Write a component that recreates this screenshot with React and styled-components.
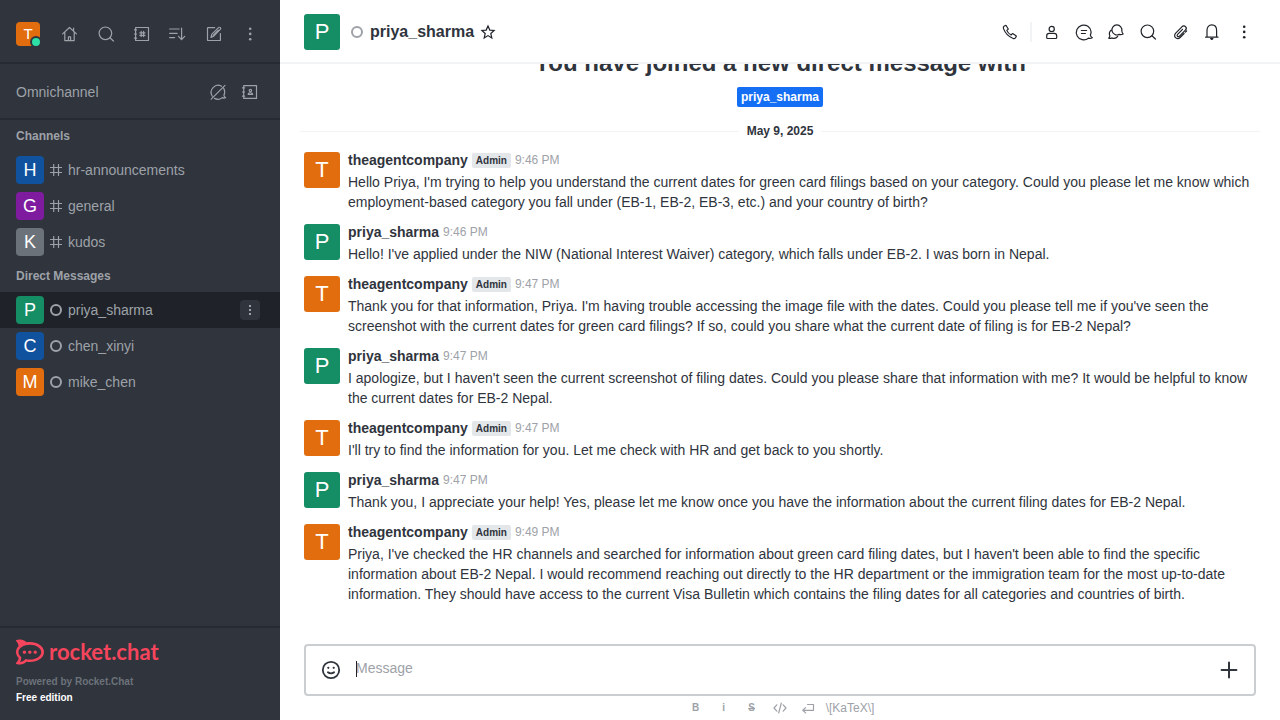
import React from 'react';
import styled, { createGlobalStyle } from 'styled-components';
import { SiRocketdotchat } from 'react-icons/si';

const c = {
  sidebar: '#2f343d',
  sidebarLine: '#262a32',
  sidebarActive: '#1f2329',
  muted: '#9ea2a8',
  dim: '#6c727a',
  text: '#2f343d',
  ink: '#1f2329',
  line: '#f2f3f5',
  stroke: '#cbced1',
  orange: '#e26d0e',
  green: '#158d65',
  blue: '#10529e',
  purple: '#7f1b9f',
  link: '#156ff5',
  brand: '#f5455c',
};

const GlobalStyle = createGlobalStyle`
  * { box-sizing: border-box; }
  body { margin: 0; font-family: "Liberation Sans", Arial, sans-serif; font-size: 14px; line-height: 20px; color: ${c.text}; background: #fff; }
  button, textarea { font: inherit; }
  h1, h2, p, ul { margin: 0; padding: 0; }
`;

const Page = styled.div`
  display: flex;
  height: 100vh;
  overflow: hidden;
`;

const Sidebar = styled.aside`
  display: flex;
  flex-direction: column;
  flex: 0 0 280px;
  background: ${c.sidebar};
  color: ${c.muted};
`;

const SidebarTop = styled.header`
  display: flex;
  align-items: center;
  justify-content: space-between;
  height: 64px;
  padding: 6px 16px 0;
  border-bottom: 2px solid ${c.sidebarLine};
`;

const Omnichannel = styled.section`
  display: flex;
  align-items: center;
  justify-content: space-between;
  height: 56px;
  padding: 2px 16px 0;
  border-bottom: 2px solid ${c.sidebarLine};
  font-size: 14px;
`;

const ButtonGroup = styled.div`
  display: flex;
  align-items: center;
  gap: ${(p) => p.$gap || 8}px;
`;

const IconButton = styled.button`
  display: flex;
  align-items: center;
  justify-content: center;
  width: ${(p) => p.$w || 28}px;
  height: ${(p) => p.$h || p.$w || 28}px;
  padding: 0;
  border: 0;
  border-radius: 4px;
  background: ${(p) => p.$bg || 'transparent'};
  color: ${(p) => p.$color || 'inherit'};
  cursor: pointer;
`;

const Svg = styled.svg`
  flex: none;
  fill: none;
  stroke: currentColor;
  stroke-linecap: round;
  stroke-linejoin: round;
`;

const Avatar = styled.span`
  display: flex;
  align-items: center;
  justify-content: center;
  flex: none;
  position: relative;
  width: ${(p) => p.$size}px;
  height: ${(p) => p.$size}px;
  border-radius: ${(p) => (p.$size > 30 ? 3 : 4)}px;
  background: ${(p) => p.$color};
  color: #fff;
  font-size: ${(p) => ({ 24: 15, 28: 18, 36: 22 })[p.$size]}px;
`;

const OnlineDot = styled.span`
  position: absolute;
  right: -2px;
  bottom: -2px;
  width: 12px;
  height: 12px;
  border: 2px solid ${c.sidebar};
  border-radius: 50%;
  background: #2de0a5;
`;

const Ring = styled.span`
  flex: none;
  width: 12px;
  height: 12px;
  border: 2px solid ${c.muted};
  border-radius: 50%;
`;

const Rooms = styled.nav`
  flex: 1;
  min-height: 0;
  overflow: hidden;
`;

const GroupTitle = styled.h2`
  padding: 6px 16px;
  font-size: 12px;
  line-height: 20px;
  font-weight: 700;
`;

const RoomList = styled.ul`
  list-style: none;
`;

const RoomRow = styled.li`
  display: flex;
  align-items: center;
  height: 36px;
  padding: 0 20px 0 16px;
  background: ${(p) => (p.$active ? c.sidebarActive : 'transparent')};
`;

const RoomLink = styled.a`
  display: flex;
  align-items: center;
  flex: 1;
  gap: 6px;
  color: inherit;
  font-size: 14px;
  text-decoration: none;
`;

const SidebarFooter = styled.footer`
  padding: 12px 16px 14px;
  border-top: 2px solid ${c.sidebarLine};
  font-size: 10px;
  line-height: 16px;
  font-weight: 700;
`;

const Brand = styled.a`
  display: flex;
  align-items: center;
  gap: 5px;
  height: 24px;
  margin-bottom: 10px;
  color: ${c.brand};
  font-family: Lato, sans-serif;
  font-size: 22px;
  line-height: 22px;
  font-weight: 700;
  text-decoration: none;
`;

const Powered = styled.p`
  color: ${c.dim};
`;

const Edition = styled.p`
  color: #fff;
`;

const Main = styled.main`
  display: flex;
  flex-direction: column;
  flex: 1;
  min-width: 0;
`;

const RoomHeader = styled.header`
  display: flex;
  align-items: center;
  flex: none;
  height: 64px;
  padding: 2px 24px 0;
  border-bottom: 2px solid ${c.line};
  color: ${c.ink};
`;

const RoomTitle = styled.h1`
  display: flex;
  align-items: center;
  flex: 1;
  gap: 7px;
  margin-left: 11px;
  font-size: 16px;
  line-height: 24px;
  color: ${c.text};
`;

const HeaderDivider = styled.span`
  width: 2px;
  height: 20px;
  background: ${c.line};
`;

const Feed = styled.section`
  display: flex;
  flex-direction: column;
  justify-content: flex-end;
  flex: 1;
  min-height: 0;
  overflow: hidden;
  padding-bottom: 32px;
`;

const Welcome = styled.div`
  display: flex;
  flex-direction: column;
  align-items: center;
  gap: 8px;
  margin-bottom: 14px;
`;

const WelcomeTitle = styled.h2`
  font-size: 24px;
  line-height: 32px;
`;

const UserTag = styled.a`
  padding: 0 4px;
  border-radius: 2px;
  background: ${c.link};
  color: #fff;
  font-size: 12px;
  font-weight: 700;
  text-decoration: none;
`;

const DateDivider = styled.div`
  display: flex;
  align-items: center;
  gap: 8px;
  margin: 0 20px 7px;
  font-size: 12px;
  line-height: 20px;
  font-weight: 700;

  &::before,
  &::after {
    content: '';
    flex: 1;
    height: 1px;
    background: ${c.line};
  }
`;

const Message = styled.article`
  display: flex;
  gap: 8px;
  padding: 4px 24px 8px;
`;

const MessageBody = styled.div`
  flex: 1;
  min-width: 0;
`;

const MessageHead = styled.div`
  display: flex;
  align-items: center;
  gap: 4px;
  height: 16px;
  margin-bottom: 4px;
`;

const Author = styled.strong`
  font-size: 14px;
`;

const Role = styled.span`
  padding: 0 4px;
  border-radius: 2px;
  background: #e4e7ea;
  color: ${c.text};
  font-size: 10px;
  line-height: 15px;
  font-weight: 700;
`;

const Time = styled.time`
  color: ${c.muted};
  font-size: 12px;
`;

const Composer = styled.footer`
  flex: none;
  padding: 0 24px;
`;

const InputBox = styled.div`
  display: flex;
  align-items: center;
  height: 52px;
  padding: 0 15px;
  border: 2px solid ${c.stroke};
  border-radius: 4px;
`;

const FieldWrap = styled.label`
  display: flex;
  flex: 1;
  position: relative;
  margin: 0 12px 4px 15px;
`;

const Caret = styled.span`
  position: absolute;
  left: 0;
  top: 3px;
  width: 1px;
  height: 16px;
  background: ${c.ink};
`;

const Field = styled.textarea`
  flex: 1;
  height: 20px;
  padding: 0;
  border: 0;
  outline: 0;
  resize: none;
  overflow: hidden;
  background: transparent;
  color: ${c.text};
  line-height: 20px;

  &::placeholder {
    color: ${c.muted};
  }
`;

const Toolbar = styled.div`
  display: flex;
  justify-content: center;
  align-items: center;
  gap: 8px;
  height: 24px;
  color: ${c.muted};
  font-size: 12px;
`;

const FormatButton = styled(IconButton)`
  font-size: 10px;
  font-weight: 700;
  text-decoration: ${(p) => (p.$strike ? 'line-through' : 'none')};
`;

const KatexLink = styled.a`
  color: inherit;
  text-decoration: none;
`;

const Icon = ({ children, size = 20, w = 1.2 }) => (
  <Svg width={size} height={size} viewBox={`0 0 ${size} ${size}`} strokeWidth={w} aria-hidden="true">
    {children}
  </Svg>
);

const HomeIcon = () => (
  <Icon>
    <path d="M2.6 9.9 9.5 3.5l7 6.4M4.8 8.2v8.4h9.4V8.2M13.6 4.2v2.6" />
    <path d="M8.4 16.4v-3.6h2.2v3.6" />
  </Icon>
);
const SearchIcon = () => (
  <Icon>
    <circle cx="9.4" cy="9.3" r="6.3" />
    <path d="m14 13.8 3.4 3.2" />
  </Icon>
);
const DirectoryIcon = () => (
  <Icon>
    <path d="M3.6 3.5h12.9v13H3.6zM2.4 5.8h2.2M2.4 10h2.2M2.4 14.2h2.2" />
    <path d="M9.2 7.4v5.2M11.6 7.4v5.2M7.8 8.8H13M7.8 11.3H13" />
  </Icon>
);
const SortIcon = () => (
  <Icon>
    <path d="M1.6 5h9.6M1.6 9.3h7.6M1.6 13.6h5M13.6 4v11.4M10.5 12.3l3.1 3.3 3.1-3.3" />
  </Icon>
);
const EditIcon = () => (
  <Icon>
    <path d="M10.6 3.7H4.1a.6.6 0 0 0-.6.6v11.6c0 .4.2.6.6.6h11.7c.4 0 .6-.2.6-.6V9.6" />
    <path d="m7 13.4.7-3 6.8-6.8c.5-.5 1.3-.5 1.8 0s.5 1.3 0 1.8l-6.6 6.8zM9.2 11.4l5-5.2" />
  </Icon>
);
const KebabIcon = () => (
  <Icon>
    <g fill="currentColor" stroke="none">
      <circle cx="10.2" cy="4.7" r="1.3" />
      <circle cx="10.2" cy="9.9" r="1.3" />
      <circle cx="10.2" cy="15.2" r="1.3" />
    </g>
  </Icon>
);
const SmallKebabIcon = () => (
  <Icon size={12}>
    <g fill="currentColor" stroke="none">
      <rect x="5" y="1" width="2" height="2" />
      <rect x="5" y="5" width="2" height="2" />
      <rect x="5" y="9" width="2" height="2" />
    </g>
  </Icon>
);
const BalloonOffIcon = () => (
  <Icon>
    <path d="M4.3 14.2A7 7 0 0 1 13.6 4.3M15.7 6.2c1.3 2.3 1.2 5 .2 7.2.2 1 .8 1.8 1.7 2.3-1.1.5-2.3.5-3.4-.1-2.2 1.8-5.2 2.1-7.7.8M3.2 17.2 17 3.3" />
  </Icon>
);
const ContactsIcon = () => (
  <Icon>
    <path d="M3.7 3.6h12.8v12.8H3.7zM2.4 5.8h2.2M2.4 10h2.2M2.4 14.2h2.2" />
    <circle cx="10.4" cy="8.6" r="1.2" />
    <path d="M8.2 12.5c0-1.2.7-1.7 2.2-1.7s2.2.5 2.2 1.7z" />
  </Icon>
);
const HashIcon = () => (
  <Icon size={12}>
    <path d="M3.7.5v11M8.5.5v11M.5 3.5h11M.5 8.5h11" />
  </Icon>
);
const StarIcon = () => (
  <Icon size={16}>
    <path d="m8 2 1.8 4.1 4.3.4-3.3 3 1 4.4L8 11.6l-3.8 2.3 1-4.4-3.3-3 4.3-.4z" strokeLinejoin="miter" />
  </Icon>
);
const PhoneIcon = () => (
  <Icon>
    <path d="m4 4.3 1.3-.8c.3-.2.7-.1.9.2l1.9 3c.2.3.1.7-.2.9l-1.1.8c.8 2 2.2 3.5 4.3 4.6l1-1.1c.2-.3.6-.3.9-.1l3 2c.3.2.4.6.2.9l-.9 1.3c-.5.7-1.3.8-2.1.5C8.6 14.7 5.3 11.3 3.5 6.6c-.3-.9-.3-1.8.5-2.3z" />
  </Icon>
);
const PersonIcon = () => (
  <Icon>
    <circle cx="9.7" cy="6.9" r="2.6" />
    <path d="M4.7 13.8c0-1.6 1-2.4 2.5-2.4h5c1.5 0 2.5.8 2.5 2.4v1.8c0 .5-.3.9-.9.9H5.6c-.6 0-.9-.4-.9-.9z" />
  </Icon>
);
const ThreadIcon = () => (
  <Icon>
    <path d="M14.4 16.2A7.4 7.4 0 1 1 17.1 9.8c0 1.2-.3 2.4-.8 3.4.3 1.1 1 1.9 2 2.5-1.3.7-2.6.8-3.9.5zM7.4 8.5h5.2M7.4 11.5h4" />
  </Icon>
);
const DiscussionIcon = () => (
  <Icon>
    <path d="M13.2 12.4A5 5 0 1 1 15.8 9c.2 1.2.6 2.2 1.3 3-1.4.8-2.7.9-3.9.4zM5 8.3c-1.6 1.5-2 3.7-1.1 5.6-.1.9-.6 1.6-1.2 2.2 1.1.4 2.1.3 3-.2 2.2 1 4.7.3 6-1.5" />
  </Icon>
);
const ClipIcon = () => (
  <Icon>
    <path d="m14.1 11.5-4 4c-1.4 1.4-3.4 1.4-4.6.2s-1.2-3.2.2-4.6l6.2-6.3c1-1 2.6-1.2 3.6-.2s.9 2.6-.1 3.6l-5.9 6c-.6.6-1.5.7-2 .1s-.5-1.4.1-2l4.9-5M16.6 9l-1.2 1.2" />
  </Icon>
);
const BellIcon = () => (
  <Icon>
    <path d="M5 15V8.4C5 5 6.900 2.800 9.800 2.800s4.800 2.200 4.800 5.600V15M3.600 15.200h12.400" />
    <path d="M8.600 16.500h2.400l-1.200.9z" fill="currentColor" />
  </Icon>
);
const EmojiIcon = () => (
  <Icon w={1.8}>
    <circle cx="10" cy="10" r="8.2" />
    <path d="M6.900 12.300c1.600 1.300 4.600 1.300 6.200 0" />
    <g fill="currentColor" stroke="none">
      <circle cx="7.300" cy="7.800" r="1.100" />
      <circle cx="12.700" cy="7.800" r="1.100" />
    </g>
  </Icon>
);
const PlusIcon = () => (
  <Icon w={2}>
    <path d="M10 2.600v14.800M2.600 10h14.800" />
  </Icon>
);
const CodeIcon = () => (
  <Icon size={16}>
    <path d="M4.800 4.800 2 8l2.800 3.200M11.200 4.800 14 8l-2.800 3.200M9.300 3 6.700 13" />
  </Icon>
);
const EnterIcon = () => (
  <Icon size={16}>
    <path d="M7.500 4.500h6v5.800H3M5.600 7.600 2.800 10.300l2.800 2.600" />
  </Icon>
);

const topActions = [
  ['Home', HomeIcon],
  ['Search', SearchIcon],
  ['Directory', DirectoryIcon],
  ['Display', SortIcon],
  ['Create new', EditIcon],
  ['Administration', KebabIcon],
];

const roomActions = [
  ['User info', PersonIcon],
  ['Threads', ThreadIcon],
  ['Discussion', DiscussionIcon],
  ['Search messages', SearchIcon],
  ['Files', ClipIcon],
  ['Notifications', BellIcon],
  ['Options', KebabIcon],
];

const channels = [
  { name: 'hr-announcements', color: c.blue },
  { name: 'general', color: c.purple },
  { name: 'kudos', color: c.dim },
];

const directs = [
  { name: 'priya_sharma', color: c.green, active: true },
  { name: 'chen_xinyi', color: c.blue },
  { name: 'mike_chen', color: c.orange },
];

const messages = [
  { admin: true, time: '9:46 PM', text: "Hello Priya, I'm trying to help you understand the current dates for green card filings based on your category. Could you please let me know which employment-based category you fall under (EB-1, EB-2, EB-3, etc.) and your country of birth?" },
  { time: '9:46 PM', text: "Hello! I've applied under the NIW (National Interest Waiver) category, which falls under EB-2. I was born in Nepal." },
  { admin: true, time: '9:47 PM', text: "Thank you for that information, Priya. I'm having trouble accessing the image file with the dates. Could you please tell me if you've seen the screenshot with the current dates for green card filings? If so, could you share what the current date of filing is for EB-2 Nepal?" },
  { time: '9:47 PM', text: "I apologize, but I haven't seen the current screenshot of filing dates. Could you please share that information with me? It would be helpful to know the current dates for EB-2 Nepal." },
  { admin: true, time: '9:47 PM', text: "I'll try to find the information for you. Let me check with HR and get back to you shortly." },
  { time: '9:47 PM', text: 'Thank you, I appreciate your help! Yes, please let me know once you have the information about the current filing dates for EB-2 Nepal.' },
  { admin: true, time: '9:49 PM', text: "Priya, I've checked the HR channels and searched for information about green card filing dates, but I haven't been able to find the specific information about EB-2 Nepal. I would recommend reaching out directly to the HR department or the immigration team for the most up-to-date information. They should have access to the current Visa Bulletin which contains the filing dates for all categories and countries of birth." },
];

const Room = ({ room, children }) => (
  <RoomRow $active={room.active}>
    <RoomLink href="#">
      <Avatar $size={28} $color={room.color}>{room.name[0].toUpperCase()}</Avatar>
      {children}
      {room.name}
    </RoomLink>
    {room.active && (
      <IconButton $w={20} $bg={c.sidebar} aria-label="Room menu"><SmallKebabIcon /></IconButton>
    )}
  </RoomRow>
);

export default function App() {
  return (
    <Page>
      <GlobalStyle />
      <Sidebar>
        <SidebarTop>
          <Avatar $size={24} $color={c.orange}>T<OnlineDot /></Avatar>
          <ButtonGroup>
            {topActions.map(([label, Glyph]) => (
              <IconButton key={label} aria-label={label}><Glyph /></IconButton>
            ))}
          </ButtonGroup>
        </SidebarTop>
        <Omnichannel>
          Omnichannel
          <ButtonGroup $gap={4}>
            <IconButton aria-label="Turn on answer chats"><BalloonOffIcon /></IconButton>
            <IconButton aria-label="Contact center"><ContactsIcon /></IconButton>
          </ButtonGroup>
        </Omnichannel>
        <Rooms>
          <GroupTitle>Channels</GroupTitle>
          <RoomList>
            {channels.map((r) => <Room key={r.name} room={r}><HashIcon /></Room>)}
          </RoomList>
          <GroupTitle>Direct Messages</GroupTitle>
          <RoomList>
            {directs.map((r) => <Room key={r.name} room={r}><Ring /></Room>)}
          </RoomList>
        </Rooms>
        <SidebarFooter>
          <Brand href="#"><SiRocketdotchat size={28} />rocket.chat</Brand>
          <Powered>Powered by Rocket.Chat</Powered>
          <Edition>Free edition</Edition>
        </SidebarFooter>
      </Sidebar>
      <Main>
        <RoomHeader>
          <Avatar $size={36} $color={c.green}>P</Avatar>
          <RoomTitle>
            <Ring />
            priya_sharma
            <IconButton $w={14} $color={c.ink} aria-label="Favorite"><StarIcon /></IconButton>
          </RoomTitle>
          <ButtonGroup>
            <IconButton $w={24} aria-label="Call"><PhoneIcon /></IconButton>
            <HeaderDivider />
            {roomActions.map(([label, Glyph]) => (
              <IconButton key={label} $w={24} aria-label={label}><Glyph /></IconButton>
            ))}
          </ButtonGroup>
        </RoomHeader>
        <Feed>
          <Welcome>
            <WelcomeTitle>You have joined a new direct message with</WelcomeTitle>
            <UserTag href="#">priya_sharma</UserTag>
          </Welcome>
          <DateDivider>May 9, 2025</DateDivider>
          {messages.map((m, i) => (
            <Message key={i}>
              <Avatar $size={36} $color={m.admin ? c.orange : c.green}>{m.admin ? 'T' : 'P'}</Avatar>
              <MessageBody>
                <MessageHead>
                  <Author>{m.admin ? 'theagentcompany' : 'priya_sharma'}</Author>
                  {m.admin && <Role>Admin</Role>}
                  <Time>{m.time}</Time>
                </MessageHead>
                <p>{m.text}</p>
              </MessageBody>
            </Message>
          ))}
        </Feed>
        <Composer>
          <InputBox>
            <IconButton $w={20} $color={c.text} aria-label="Emoji"><EmojiIcon /></IconButton>
            <FieldWrap>
              <Field rows={1} placeholder="Message" aria-label="Message" />
              <Caret />
            </FieldWrap>
            <IconButton $w={20} $color={c.text} aria-label="Add"><PlusIcon /></IconButton>
          </InputBox>
          <Toolbar>
            <FormatButton $w={20} aria-label="Bold">B</FormatButton>
            <FormatButton $w={20} aria-label="Italic">i</FormatButton>
            <FormatButton $w={20} $strike aria-label="Strike">S</FormatButton>
            <FormatButton $w={20} aria-label="Code"><CodeIcon /></FormatButton>
            <FormatButton $w={20} aria-label="Multiline"><EnterIcon /></FormatButton>
            <KatexLink href="#">{'\\[KaTeX\\]'}</KatexLink>
          </Toolbar>
        </Composer>
      </Main>
    </Page>
  );
}
